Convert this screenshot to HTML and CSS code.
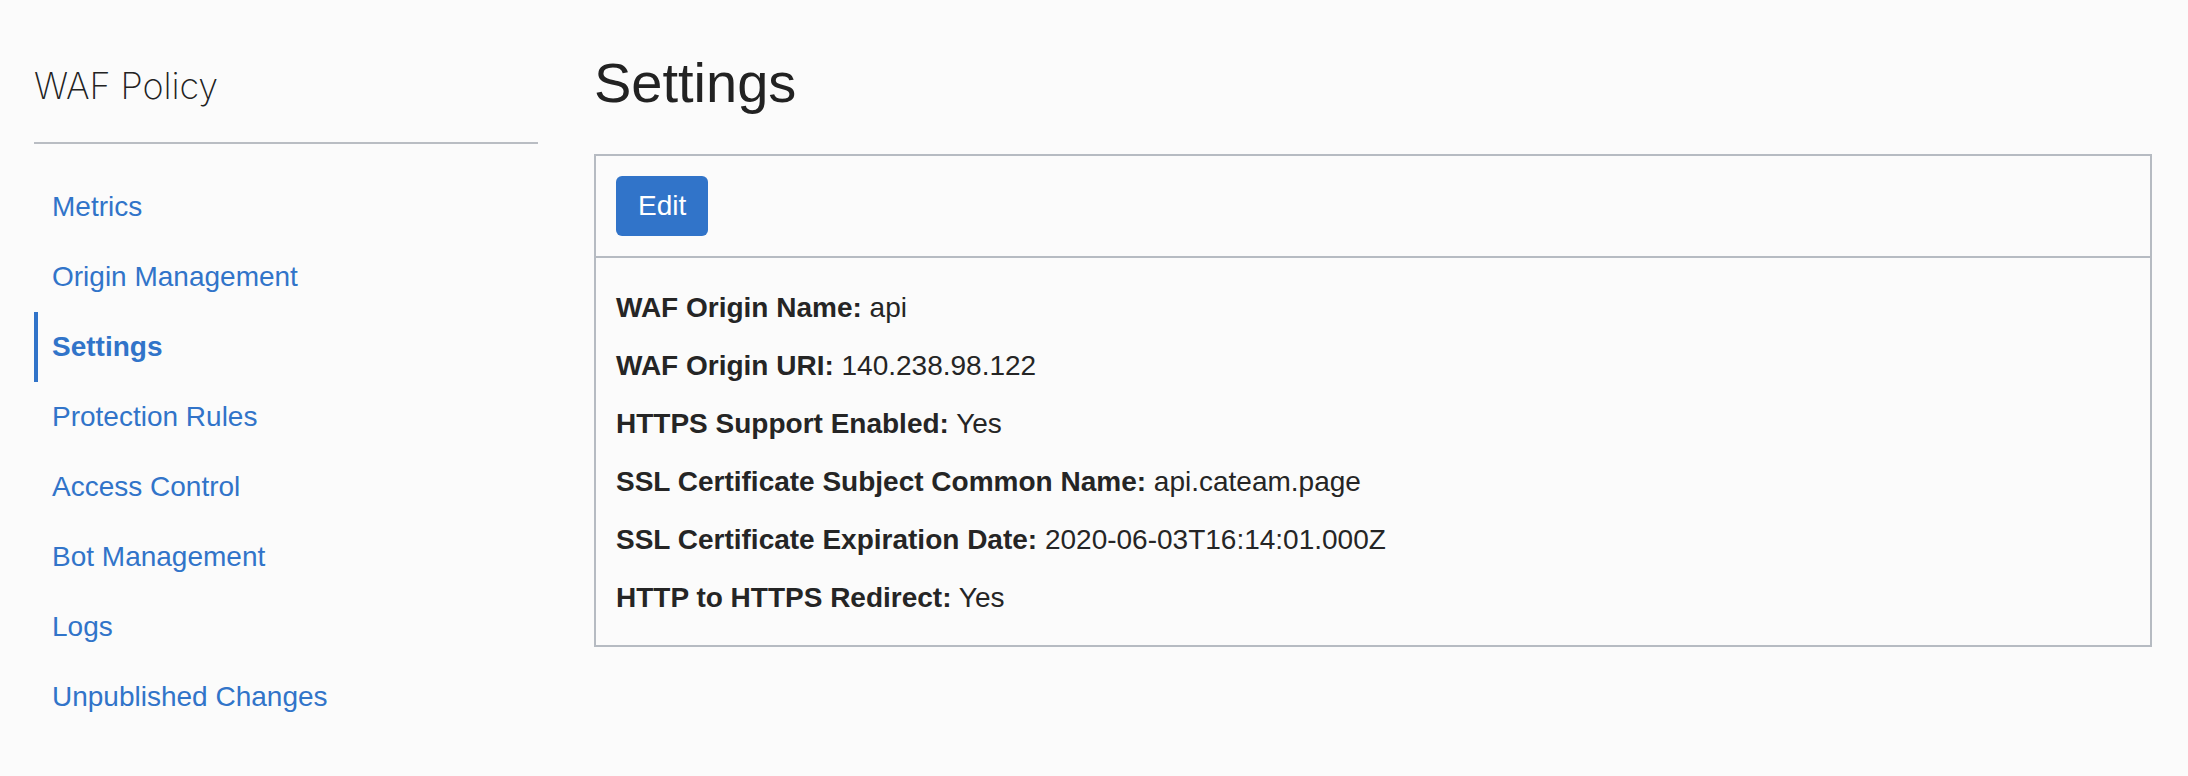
FILE: index.html
```html
<!DOCTYPE html>
<html lang="en">
<head>
<meta charset="utf-8">
<title>WAF Policy - Settings</title>
<link rel="stylesheet" href="styles.css">
</head>
<body>
<div class="page">
  <aside class="sidebar">
    <h2 class="sidebar-title">WAF Policy</h2>
    <hr class="sidebar-rule">
    <ul class="nav">
      <li class="nav-item"><a href="#" class="nav-link">Metrics</a></li>
      <li class="nav-item"><a href="#" class="nav-link">Origin Management</a></li>
      <li class="nav-item nav-item-active"><a href="#" class="nav-link">Settings</a></li>
      <li class="nav-item"><a href="#" class="nav-link">Protection Rules</a></li>
      <li class="nav-item"><a href="#" class="nav-link">Access Control</a></li>
      <li class="nav-item"><a href="#" class="nav-link">Bot Management</a></li>
      <li class="nav-item"><a href="#" class="nav-link">Logs</a></li>
      <li class="nav-item"><a href="#" class="nav-link">Unpublished Changes</a></li>
    </ul>
  </aside>
  <main class="main">
    <h1 class="page-title">Settings</h1>
    <section class="panel">
      <div class="panel-header">
        <button class="btn-primary" type="button">Edit</button>
      </div>
      <div class="panel-body">
        <p class="field"><span class="field-label">WAF Origin Name:</span> api</p>
        <p class="field"><span class="field-label">WAF Origin URI:</span> 140.238.98.122</p>
        <p class="field"><span class="field-label">HTTPS Support Enabled:</span> Yes</p>
        <p class="field"><span class="field-label">SSL Certificate Subject Common Name:</span> api.cateam.page</p>
        <p class="field"><span class="field-label">SSL Certificate Expiration Date:</span> 2020-06-03T16:14:01.000Z</p>
        <p class="field"><span class="field-label">HTTP to HTTPS Redirect:</span> Yes</p>
      </div>
    </section>
  </main>
</div>
</body>
</html>
```

FILE: styles.css
```css
html, body {
  margin: 0;
  padding: 0;
  background: #fbfbfb;
}

body {
  font-family: "Liberation Sans", Arial, sans-serif;
  color: #252525;
}

.page {
  display: flex;
  gap: 56px;
  padding: 0 36px 0 34px;
}

.sidebar {
  flex: 0 0 504px;
}

.sidebar-title {
  margin: 65px 0 0;
  font-family: Inter, Roboto, "Liberation Sans", sans-serif;
  font-weight: 200;
  font-size: 36px;
  letter-spacing: -0.1px;
  line-height: 43px;
  color: #222;
}

.sidebar-rule {
  margin: 34px 0 0;
  border: 0;
  height: 2px;
  background: #b9bdc3;
}

.nav {
  list-style: none;
  margin: 28px 0 0;
  padding: 0;
}

.nav-item {
  height: 70px;
  line-height: 70px;
  padding-left: 18px;
  font-size: 28px;
}

.nav-item-active {
  border-left: 4px solid #3174c9;
  padding-left: 14px;
  font-weight: bold;
}

.nav-link {
  color: #3174c9;
  text-decoration: none;
}

.main {
  flex: 1 1 auto;
  min-width: 0;
}

.page-title {
  margin: 49px 0 38px;
  font-size: 56px;
  font-weight: normal;
  line-height: 67px;
  color: #222;
}

.panel {
  border: 2px solid #b6bbc2;
}

.panel-header {
  padding: 20px 20px;
  border-bottom: 2px solid #b6bbc2;
}

.btn-primary {
  display: block;
  height: 60px;
  padding: 0 22px;
  border: 0;
  border-radius: 6px;
  background: #3174c9;
  color: #fff;
  font-family: "Liberation Sans", Arial, sans-serif;
  font-size: 28px;
  line-height: 60px;
}

.panel-body {
  padding: 21px 20px 18px;
}

.field {
  margin: 0;
  font-size: 28px;
  line-height: 58px;
}

.field-label {
  font-weight: bold;
}
```
